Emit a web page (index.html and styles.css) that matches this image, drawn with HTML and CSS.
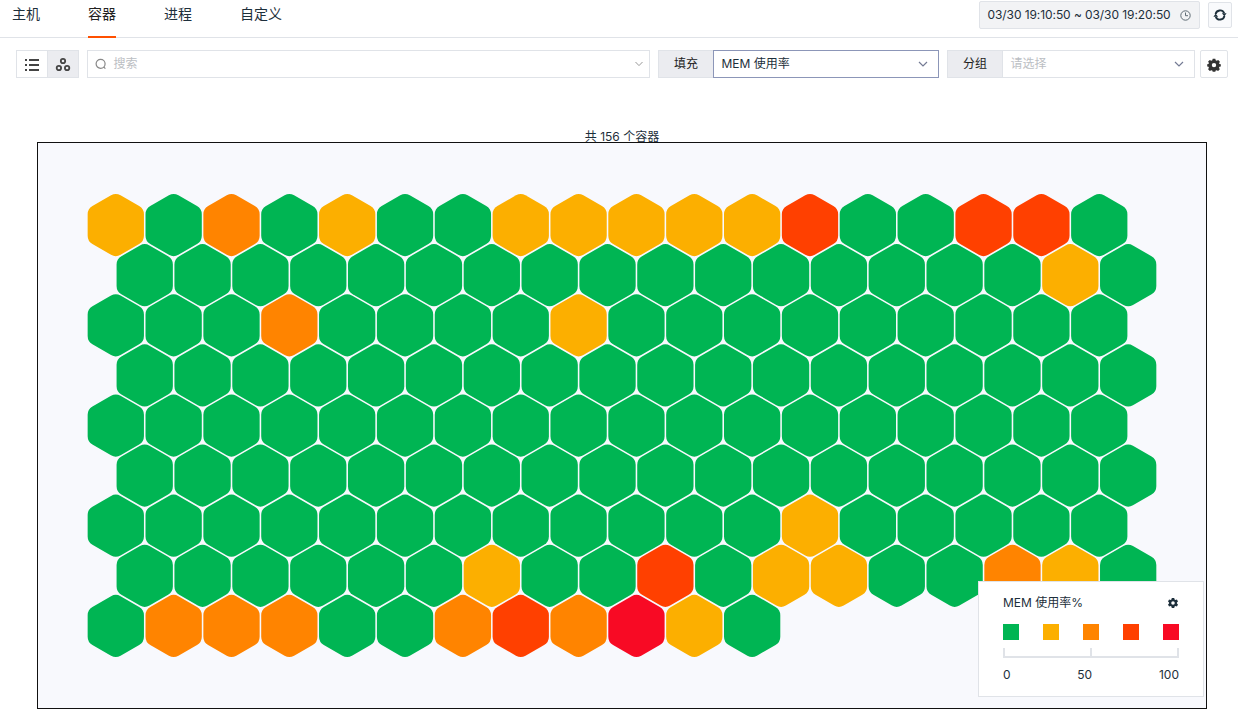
FILE: index.html
```html
<!DOCTYPE html>
<html lang="zh-CN">
<head>
<meta charset="utf-8">
<title>容器</title>
<link rel="stylesheet" href="styles.css">
</head>
<body>
<header class="header">
  <nav class="tabs">
    <a class="tab">主机</a>
    <a class="tab active">容器</a>
    <a class="tab">进程</a>
    <a class="tab">自定义</a>
  </nav>
  <div class="time-tools">
    <div class="time-range"><span>03/30 19:10:50 ~ 03/30 19:20:50</span>
      <svg width="11" height="11" viewBox="0 0 11 11" fill="none" stroke="#5f6c75"><circle cx="5.5" cy="5.5" r="4.7"/><path d="M5.5 2.5V5.7H8"/></svg>
    </div>
    <button class="icon-button refresh" aria-label="刷新">
      <svg width="14" height="14" viewBox="0 0 14 14" fill="none" stroke="#1d2f3b" stroke-width="1.9"><path d="M2.6 6.2A4.5 4.5 0 0 1 11.2 5.2M11.4 7.8A4.5 4.5 0 0 1 2.8 8.8"/><path d="M8.8 5.2H13.6L11.4 8.2ZM5.2 8.8H.4L2.6 5.8Z" fill="#1d2f3b" stroke="none"/></svg>
    </button>
  </div>
</header>
<section class="toolbar">
  <div class="view-switch">
    <button class="view" aria-label="列表"><svg width="14" height="14" viewBox="0 0 14 14" fill="#444"><path d="M0 1h2v2H0zM4 1h10v2H4zM0 6h2v2H0zM4 6h10v2H4zM0 11h2v2H0zM4 11h10v2H4z"/></svg></button>
    <button class="view selected" aria-label="蜂窝图"><svg width="16" height="16" viewBox="0 0 16 16" fill="none" stroke="#444" stroke-width="1.8"><circle cx="8" cy="4" r="2.2"/><circle cx="3.9" cy="11" r="2.2"/><circle cx="12.1" cy="11" r="2.2"/></svg></button>
  </div>
  <div class="search">
    <svg width="12" height="12" viewBox="0 0 12 12" fill="none" stroke="#888" stroke-width="1.2"><circle cx="5.6" cy="5.8" r="4.5"/><path d="M8.6 8.8L10.4 10.6"/></svg>
    <span class="placeholder">搜索</span>
    <svg class="chevron" width="10" height="6" viewBox="0 0 10 6" fill="none" stroke="#999"><path d="M1.5 1L5 4.6L8.5 1"/></svg>
  </div>
  <div class="field fill-field">
    <label class="label">填充</label>
    <div class="select focused"><span>MEM 使用率</span><svg width="10" height="6" viewBox="0 0 10 6" fill="none" stroke="#747b94" stroke-width="1.2"><path d="M1 1L5 5L9 1"/></svg></div>
  </div>
  <div class="field group-field">
    <label class="label">分组</label>
    <div class="select"><span class="placeholder">请选择</span><svg width="10" height="6" viewBox="0 0 10 6" fill="none" stroke="#747b94" stroke-width="1.2"><path d="M1 1L5 5L9 1"/></svg></div>
  </div>
  <button class="icon-button settings" aria-label="设置">
    <svg width="14" height="14" viewBox="0 0 14 14"><path fill="#333" fill-rule="evenodd" d="M5.7.7h2.6l.4 1.6 1 .4 1.5-.8 1.7 1.8-.8 1.5.3.7 1.4.3v2.2l-1.4.4-.4 1 .8 1.5-1.7 1.7-1.5-.8-.9.4-.4 1.2H5.7l-.4-1.2-1-.4-1.5.8-1.7-1.7.8-1.5-.4-1-1.3-.4V6.2l1.3-.3.4-.8-.8-1.5 1.7-1.7 1.5.8 1-.4zM7 4.9a2.2 2.2 0 1 0 0 4.4 2.2 2.2 0 0 0 0-4.4z"/></svg>
  </button>
</section>
<main class="content">
  <div class="count">共 156 个容器</div>
  <div class="canvas">
    <svg id="honeycomb" width="1168" height="565"></svg>
    <aside class="legend">
      <div class="legend-title"><span>MEM 使用率%</span>
        <svg class="legend-gear" width="10" height="10" viewBox="0 0 14 14"><path fill="#1d2f3b" fill-rule="evenodd" d="M5.3 0h3.4l.5 2 1.3.8 2-.7 1.5 2.7-1.5 1.4v1.6l1.5 1.4-1.5 2.7-2-.7-1.3.8-.5 2H5.3l-.5-2-1.3-.8-2 .7L0 9.2l1.5-1.4V6.2L0 4.8l1.5-2.7 2 .7L4.8 2zM7 4.5a2.5 2.5 0 1 0 0 5 2.5 2.5 0 0 0 0-5z"/></svg>
      </div>
      <div class="swatches"><i class="swatch level-g"></i><i class="swatch level-y"></i><i class="swatch level-o"></i><i class="swatch level-r"></i><i class="swatch level-c"></i></div>
      <div class="scale"><i class="half"></i></div>
      <div class="scale-labels"><span>0</span><span>50</span><span>100</span></div>
    </aside>
  </div>
</main>
<script src="honeycomb.js"></script>
</body>
</html>
```
FILE: styles.css
```css
* { box-sizing: border-box; }
body { margin: 0; height: 722px; overflow: hidden; background: #fff; color: #1d2f3b; font: 12px/18px Inter, "Noto Sans CJK SC", sans-serif; }
button { padding: 0; margin: 0; border: 0; background: #fff; display: flex; align-items: center; justify-content: center; }
svg { display: block; flex: none; }
.header { height: 38px; display: flex; justify-content: space-between; border-bottom: 1px solid #e0e3e8; }
.tabs { display: flex; gap: 48px; padding-left: 12px; font-size: 14px; }
.tab { height: 38px; padding-top: 5px; }
.tab.active { color: #222; border-bottom: 2px solid #ff5000; }
.time-tools { display: flex; gap: 8px; padding: 1px 6px 0 0; }
.time-range { width: 221px; height: 28px; display: flex; align-items: center; justify-content: space-between; padding: 0 8px 0 7.5px; border: 1px solid #e0e3e8; border-radius: 2px; background: #f2f3f5; white-space: nowrap; letter-spacing: -0.08px; }
.icon-button { border: 1px solid #e0e3e8; border-radius: 2px; }
.refresh { width: 24px; height: 26px; margin-top: 1px; background: #f9fafc; }
.toolbar { display: flex; padding: 12px 10px 0 16px; }
.view-switch { display: flex; width: 63px; height: 28px; border: 1px solid #e0e3e8; }
.view { width: 30px; padding-top: 2px; }
.view.selected { width: 31px; background: #ebecf0; border-left: 1px solid #e0e3e8; }
.search { display: flex; align-items: center; flex: 1; height: 28px; margin-left: 8px; padding: 0 5px 0 7px; border: 1px solid #e0e3e8; }
.search .placeholder { margin-left: 6.5px; flex: 1; }
.placeholder { color: #bbbec3; }
.field { display: flex; height: 28px; margin-left: 8px; }
.fill-field { width: 281px; }
.group-field { width: 248px; }
.label { width: 55px; line-height: 26px; text-align: center; color: #222; background: #ebecf0; border: 1px solid #e0e3e8; border-right: 0; }
.select { display: flex; align-items: center; justify-content: space-between; flex: 1; padding: 0 10px 0 7.5px; border: 1px solid #e0e3e8; }
.select.focused { border-color: #8c96b8; }
.settings { width: 28px; height: 28px; margin-left: 5px; padding-top: 2px; }
.content { margin-top: 50px; padding-left: 37px; }
.count { width: 1170px; height: 14px; line-height: 18px; text-align: center; }
.canvas { position: relative; width: 1170px; height: 567px; border: 1px solid #111; background: #f8f9fd; }
.legend { position: absolute; right: 2px; bottom: 11px; width: 226px; height: 116px; padding: 12px 24px 0; border: 1px solid #e0e3e8; background: #fff; }
.legend-title { display: flex; justify-content: space-between; align-items: center; }
.legend-gear { margin-right: 1px; }
.swatches { display: flex; justify-content: space-between; margin-top: 12px; }
.swatch { width: 16px; height: 16px; }
.scale { height: 10px; margin-top: 8px; border: 2px solid #e0e3e8; border-top: 0; display: flex; justify-content: center; }
.half { width: 2px; height: 8px; background: #e0e3e8; }
.scale-labels { display: flex; justify-content: space-between; margin-top: 8px; }
.level-g { fill: #00b553; background: #00b553; }
.level-y { fill: #fcaf00; background: #fcaf00; }
.level-o { fill: #ff8400; background: #ff8400; }
.level-r { fill: #ff4000; background: #ff4000; }
.level-c { fill: #f80a24; background: #f80a24; }
```
FILE: honeycomb.js
```js
// One letter per container: severity level of its memory use.
const rows = [
  'ygogyggyyyyyrggrrg',
  'ggggggggggggggggyg',
  'gggoggggyggggggggg',
  'gggggggggggggggggg',
  'gggggggggggggggggg',
  'gggggggggggggggggg',
  'ggggggggggggyggggg',
  'ggggggyggrgyyggoyg',
  'gooogg' + 'orocyg'
];
const PITCH = 57.85, ROW = 50.1, RADIUS = 32.5, ROUND = 5.5;

function hexPath(cx, cy) {
  const pts = Array.from({ length: 6 }, (_, i) => {
    const a = (i * 60 - 90) * Math.PI / 180;
    return [cx + RADIUS * Math.cos(a), cy + RADIUS * Math.sin(a)];
  });
  const near = (p, q) => [0, 1].map(k => p[k] + (q[k] - p[k]) * ROUND / RADIUS);
  return pts.map((p, i) => {
    const a = near(p, pts[(i + 5) % 6]), b = near(p, pts[(i + 1) % 6]);
    return `${i ? 'L' : 'M'}${a}Q${p} ${b}`;
  }).join('') + 'Z';
}

const svg = document.getElementById('honeycomb');
rows.forEach((row, r) => [...row].forEach((level, c) => {
  const path = document.createElementNS('http://www.w3.org/2000/svg', 'path');
  path.setAttribute('d', hexPath(77.8 + (c + (r % 2) / 2) * PITCH, 82.1 + r * ROW));
  path.setAttribute('class', 'level-' + level);
  svg.appendChild(path);
}));
```
